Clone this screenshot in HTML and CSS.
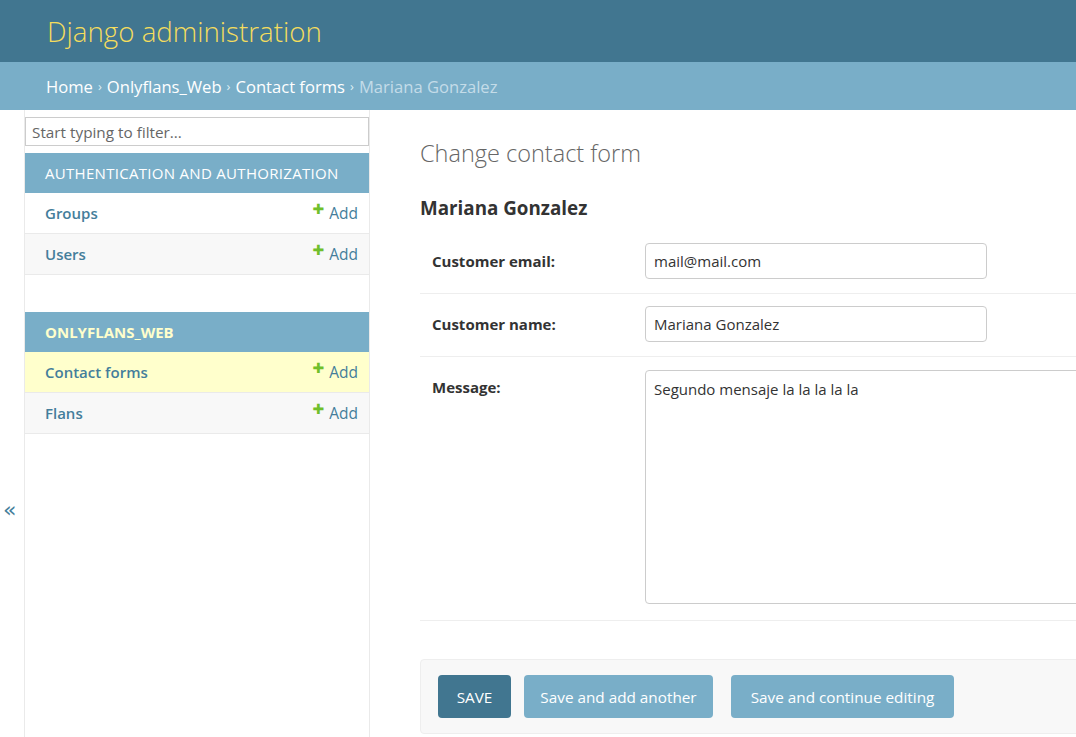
FILE: index.html
```html
<!DOCTYPE html>
<html lang="en">
<head>
<meta charset="utf-8">
<title>Change contact form | Django site admin</title>
<link rel="stylesheet" href="styles.css">
</head>
<body>
<div class="header">
  <div class="branding">Django administration</div>
</div>
<div class="breadcrumbs">
  <a href="#">Home</a><span class="sep">›</span><a href="#">Onlyflans_Web</a><span class="sep">›</span><a href="#">Contact forms</a><span class="sep">›</span><span class="current">Mariana Gonzalez</span>
</div>
<div class="main">
  <button class="toggle" type="button">«</button>
  <nav class="sidebar">
    <input class="filter" type="search" placeholder="Start typing to filter...">
    <div class="module">
      <div class="caption">Authentication and Authorization</div>
      <div class="row"><a class="model" href="#">Groups</a><a class="add" href="#"><span class="plus">✚</span>Add</a></div>
      <div class="row alt"><a class="model" href="#">Users</a><a class="add" href="#"><span class="plus">✚</span>Add</a></div>
    </div>
    <div class="module">
      <div class="caption current-app">Onlyflans_Web</div>
      <div class="row selected"><a class="model" href="#">Contact forms</a><a class="add" href="#"><span class="plus">✚</span>Add</a></div>
      <div class="row alt"><a class="model" href="#">Flans</a><a class="add" href="#"><span class="plus">✚</span>Add</a></div>
    </div>
  </nav>
  <div class="content">
    <h1 class="title">Change contact form</h1>
    <h2 class="subtitle">Mariana Gonzalez</h2>
    <div class="fieldset">
      <div class="form-row">
        <label class="label">Customer email:</label>
        <input class="field" type="text" value="mail@mail.com">
      </div>
      <div class="form-row">
        <label class="label">Customer name:</label>
        <input class="field" type="text" value="Mariana Gonzalez">
      </div>
      <div class="form-row">
        <label class="label">Message:</label>
        <textarea class="area">Segundo mensaje la la la la la</textarea>
      </div>
    </div>
    <div class="submit-row">
      <button class="btn default" type="button">SAVE</button>
      <button class="btn second" type="button">Save and add another</button>
      <button class="btn third" type="button">Save and continue editing</button>
    </div>
  </div>
</div>
</body>
</html>
```

FILE: styles.css
```css
html, body {
  margin: 0;
  padding: 0;
  overflow: hidden;
}
body {
  font-family: "Open Sans", "Noto Sans", sans-serif;
  color: #333;
  background: #fff;
  width: 1076px;
  height: 737px;
}
a { text-decoration: none; }

.header {
  height: 62px;
  background: #417690;
  display: flex;
  align-items: center;
  padding-left: 47px;
}
.branding {
  color: #f5dd5d;
  font-size: 27.7px;
  font-weight: 300;
}

.breadcrumbs {
  height: 48px;
  background: #79aec8;
  display: flex;
  align-items: center;
  padding-left: 46px;
  font-size: 16.6px;
  color: #fff;
}
.breadcrumbs a { color: #fff; }
.breadcrumbs .sep { margin: 0 5px; font-size: 13px; color: #dfeef5; }
.breadcrumbs .current { color: #c4dce8; }

.main {
  display: flex;
  height: 627px;
}
.toggle {
  width: 25px;
  flex: none;
  border: 0;
  border-right: 1px solid #eaeaea;
  background: #fff;
  color: #447e9b;
  font-size: 22px;
  margin: 0;
  font-family: "DejaVu Sans", sans-serif;
  line-height: 1;
  display: flex;
  align-items: flex-start;
  justify-content: flex-start;
  padding: 389px 0 0 3px;
}
.sidebar {
  width: 344px;
  flex: none;
  border-right: 1px solid #eaeaea;
}
.filter {
  display: block;
  box-sizing: border-box;
  width: 344px;
  height: 29px;
  margin: 7px 0 7px;
  border: 1px solid #ccc;
  padding: 2px 6px;
  font-family: inherit;
  font-size: 15.3px;
  color: #333;
}
.filter::placeholder { color: #666; }
.module { margin-bottom: 37px; }
.caption {
  height: 40px;
  box-sizing: border-box;
  background: #79aec8;
  color: #fff;
  text-transform: uppercase;
  font-size: 15px;
  letter-spacing: 0.3px;
  padding-left: 20px;
  display: flex;
  align-items: center;
}
.caption.current-app { color: #ffc; font-weight: 700; letter-spacing: 0; }
.row {
  height: 41px;
  box-sizing: border-box;
  border-bottom: 1px solid #eaeaea;
  display: flex;
  align-items: center;
  justify-content: space-between;
  padding: 0 11px 0 20px;
  font-size: 15px;
  background: #fff;
}
.row.alt { background: #f8f8f8; }
.row.selected { background: #ffc; }
.model { color: #447e9b; font-weight: 600; }
.add { color: #447e9b; display: flex; align-items: center; font-size: 15.5px; }
.plus {
  color: #70bf2b;
  font-size: 14px;
  font-family: "DejaVu Sans", sans-serif;
  margin-right: 5px;
  position: relative;
  top: -4px;
}

.content {
  flex: 1;
  padding: 0 0 0 50px;
  min-width: 0;
}
.title {
  font-size: 23.5px;
  font-weight: 300;
  color: #666;
  margin: 27px 0 0;
  line-height: 32px;
}
.subtitle {
  font-size: 18.8px;
  font-weight: 700;
  color: #333;
  margin: 27px 0 0;
  line-height: 24px;
}
.fieldset {
  margin-top: 11px;
}
.form-row {
  display: flex;
  align-items: flex-start;
  border-bottom: 1px solid #eee;
  padding: 12px 0 14px 12px;
  width: 900px;
}
.label {
  width: 213px;
  flex: none;
  font-size: 15px;
  font-weight: 700;
  color: #333;
  padding-top: 8px;
}
.field {
  box-sizing: border-box;
  width: 342px;
  height: 36px;
  border: 1px solid #ccc;
  border-radius: 4px;
  padding: 0 8px;
  font-family: inherit;
  font-size: 15px;
  color: #333;
}
.area {
  box-sizing: border-box;
  width: 460px;
  height: 234px;
  border: 1px solid #ccc;
  border-radius: 4px;
  padding: 8px 8px;
  font-family: inherit;
  font-size: 15px;
  color: #333;
  resize: none;
  line-height: 20px;
  margin: 1px 0 2px;
}
.submit-row {
  margin-top: 38px;
  width: 900px;
  height: 75px;
  box-sizing: border-box;
  background: #f8f8f8;
  border: 1px solid #eee;
  border-radius: 4px;
  padding: 15px 17px;
  display: flex;
  align-items: flex-start;
}
.btn {
  height: 43px;
  border: 0;
  border-radius: 4px;
  color: #fff;
  font-family: inherit;
  font-size: 15.3px;
  padding: 0;
  margin: 0;
}
.btn.default { background: #417690; width: 73px; }
.btn.second { background: #79aec8; width: 189px; margin-left: 13px; }
.btn.third { background: #79aec8; width: 223px; margin-left: 18px; }
```
